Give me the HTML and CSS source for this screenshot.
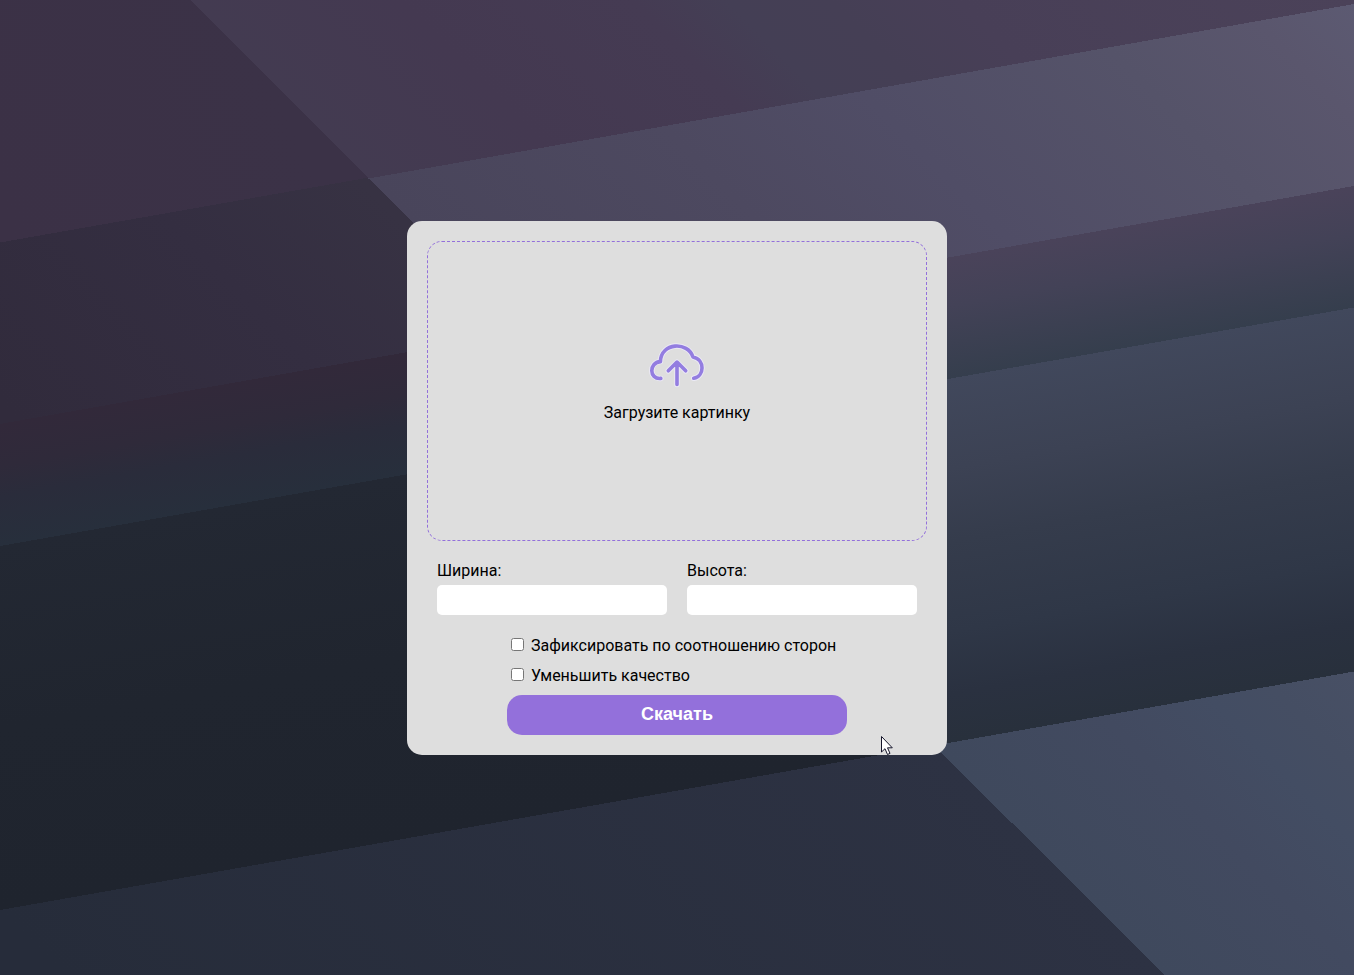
FILE: index.html
```html
<!DOCTYPE html>
<html lang="ru">
<head>
<meta charset="utf-8">
<title>Загрузите картинку</title>
<link rel="stylesheet" href="styles.css">
</head>
<body>
<svg class="backdrop" viewBox="0 0 1354 975" preserveAspectRatio="none" aria-hidden="true">
  <defs>
    <linearGradient id="l1" gradientUnits="userSpaceOnUse" x1="0" y1="200" x2="280" y2="90"><stop stop-color="#3b3146"/><stop offset="1" stop-color="#3b3247"/></linearGradient>
    <linearGradient id="r1" gradientUnits="userSpaceOnUse" x1="190" y1="0" x2="772" y2="-582"><stop stop-color="#433b51"/><stop offset=".18" stop-color="#443951"/><stop offset=".38" stop-color="#453b53"/><stop offset=".46" stop-color="#443f55"/><stop offset=".55" stop-color="#453f55"/><stop offset=".66" stop-color="#483f57"/><stop offset="1" stop-color="#4b4259"/></linearGradient>
    <linearGradient id="l2" gradientUnits="userSpaceOnUse" x1="0" y1="400" x2="290" y2="110"><stop stop-color="#312b3c"/><stop offset=".6" stop-color="#342e41"/><stop offset="1" stop-color="#373243"/></linearGradient>
    <linearGradient id="r2" gradientUnits="userSpaceOnUse" x1="370" y1="180" x2="950" y2="-400"><stop stop-color="#49455b"/><stop offset=".3" stop-color="#4d4960"/><stop offset=".5" stop-color="#504d66"/><stop offset=".75" stop-color="#555369"/><stop offset=".9" stop-color="#5a566d"/><stop offset="1" stop-color="#5c5a72"/></linearGradient>
    <linearGradient id="l3" gradientUnits="userSpaceOnUse" x1="0" y1="424" x2="20.8" y2="542"><stop stop-color="#32293a"/><stop offset=".35" stop-color="#2f2a3a"/><stop offset=".6" stop-color="#2a2c3b"/><stop offset="1" stop-color="#272f3c"/></linearGradient>
    <linearGradient id="r3" gradientUnits="userSpaceOnUse" x1="947" y1="258" x2="967.8" y2="376"><stop stop-color="#4a435a"/><stop offset=".4" stop-color="#434257"/><stop offset="1" stop-color="#353e4d"/></linearGradient>
    <linearGradient id="l4" gradientUnits="userSpaceOnUse" x1="0" y1="546" x2="62" y2="899"><stop stop-color="#232833"/><stop offset=".5" stop-color="#20252f"/><stop offset="1" stop-color="#1f242e"/></linearGradient>
    <linearGradient id="r4" gradientUnits="userSpaceOnUse" x1="947" y1="378" x2="1009" y2="731"><stop stop-color="#41485c"/><stop offset=".25" stop-color="#3c4254"/><stop offset=".45" stop-color="#353c4c"/><stop offset=".7" stop-color="#2f3747"/><stop offset=".87" stop-color="#2a3140"/><stop offset="1" stop-color="#28303c"/></linearGradient>
    <linearGradient id="l5" gradientUnits="userSpaceOnUse" x1="0" y1="910" x2="550" y2="360"><stop stop-color="#262c3a"/><stop offset="1" stop-color="#2d3243"/></linearGradient>
    <linearGradient id="r5" gradientUnits="userSpaceOnUse" x1="940" y1="750" x2="1187" y2="503"><stop stop-color="#3f495d"/><stop offset=".4" stop-color="#424a60"/><stop offset=".65" stop-color="#434d63"/><stop offset=".8" stop-color="#454e63"/><stop offset="1" stop-color="#485065"/></linearGradient>
  </defs>
  <path fill="url(#l1)" d="M0 0H190L369 178L0 243Z"/>
  <path fill="url(#l2)" d="M0 242.5L369 177.5L582 322L0 425Z"/>
  <path fill="url(#l3)" d="M0 424L578 322L700 423L0 547Z"/>
  <path fill="url(#l4)" d="M0 546L700 422.6L942 752L0 911Z"/>
  <path fill="url(#l5)" d="M0 910L939 744.5L1165 975H0Z"/>
  <path fill="url(#r1)" d="M190 0H1354V5L369 179Z"/>
  <path fill="url(#r2)" d="M368.5 178.5L1354 4V187L581 391Z"/>
  <path fill="url(#r3)" d="M520 333L1354 186V309L675 485Z"/>
  <path fill="url(#r4)" d="M675 427L1354 307.5V673L938 748Z"/>
  <path fill="url(#r5)" d="M934 745.5L1354 671.5V975H1165Z"/>
</svg>
<main class="page">
  <form class="card">
    <div class="dropzone">
      <svg class="upload-icon" width="60" height="50" viewBox="0 0 60 50" aria-hidden="true">
        <g fill="none" stroke-linecap="round" stroke-linejoin="round">
          <path class="halo" d="M13.8 38.4C1.9 39.6 1.8 22.4 13.4 21.6C13.9 2.2 41 1.2 46 17C58.2 19.6 57.6 36.4 46.7 38.3M30 44.4V22.3M21.3 30.8L30 22.1L38.7 30.8"/>
          <path class="line" d="M13.8 38.4C1.9 39.6 1.8 22.4 13.4 21.6C13.9 2.2 41 1.2 46 17C58.2 19.6 57.6 36.4 46.7 38.3M30 44.4V22.3M21.3 30.8L30 22.1L38.7 30.8"/>
        </g>
      </svg>
      <span class="caption">Загрузите картинку</span>
    </div>
    <div class="sizes">
      <label class="field">Ширина:<input class="size-input" type="text"></label>
      <label class="field">Высота:<input class="size-input" type="text"></label>
    </div>
    <div class="options">
      <label class="option"><input class="check" type="checkbox">Зафиксировать по соотношению сторон</label>
      <label class="option"><input class="check" type="checkbox">Уменьшить качество</label>
      <button class="download" type="button">Скачать</button>
    </div>
  </form>
</main>
<svg class="cursor" width="14" height="21" viewBox="0 0 14 21" aria-hidden="true"><path d="M1.5 1.5V17L5 13.7L7.5 19.5L10 18.4L7.5 12.8H12.3Z" fill="#fff" stroke="#15152a" stroke-width="1"/></svg>
</body>
</html>
```
FILE: styles.css
```css
* { box-sizing: border-box; }
body {
  margin: 0;
  height: 100vh;
  overflow: hidden;
  background: #20252f;
  color: #000;
  font: 16px/20px Roboto, sans-serif;
}
.backdrop {
  position: absolute;
  inset: 0;
  width: 100%;
  height: 100%;
  shape-rendering: crispEdges;
}
.page {
  position: relative;
  height: 100%;
  display: flex;
  align-items: center;
  justify-content: center;
}
.card {
  width: 540px;
  height: 534px;
  padding: 20px;
  border-radius: 15px;
  background: #dedede;
}
.dropzone {
  height: 300px;
  display: flex;
  flex-direction: column;
  align-items: center;
  padding-top: 98px;
  border: 1px dashed mediumpurple;
  border-radius: 15px;
}
.upload-icon { flex: none; }
.halo { stroke: #ebe9f5; stroke-width: 5.5; }
.line { stroke: #937de0; stroke-width: 3.6; }
.caption { margin-top: 13px; }
.sizes {
  display: flex;
  gap: 20px;
  padding: 20px 10px 0;
}
.field {
  flex: 1;
  display: flex;
  flex-direction: column;
  gap: 4px;
}
.size-input {
  width: 100%;
  height: 30px;
  border: 0;
  border-radius: 5px;
  background: #fff;
}
.options {
  width: 340px;
  margin: 20px auto 0;
  display: flex;
  flex-direction: column;
}
.option {
  height: 30px;
  display: flex;
  align-items: flex-start;
  line-height: 22px;
}
.check {
  width: 13px;
  height: 13px;
  margin: 3px 7px 3px 4px;
}
.download {
  height: 40px;
  border: 0;
  border-radius: 15px;
  background: mediumpurple;
  color: #fff;
  font: bold 18px "Liberation Sans", Arial, sans-serif;
  padding: 0;
}
.cursor {
  position: absolute;
  left: 880px;
  top: 735px;
}
```
